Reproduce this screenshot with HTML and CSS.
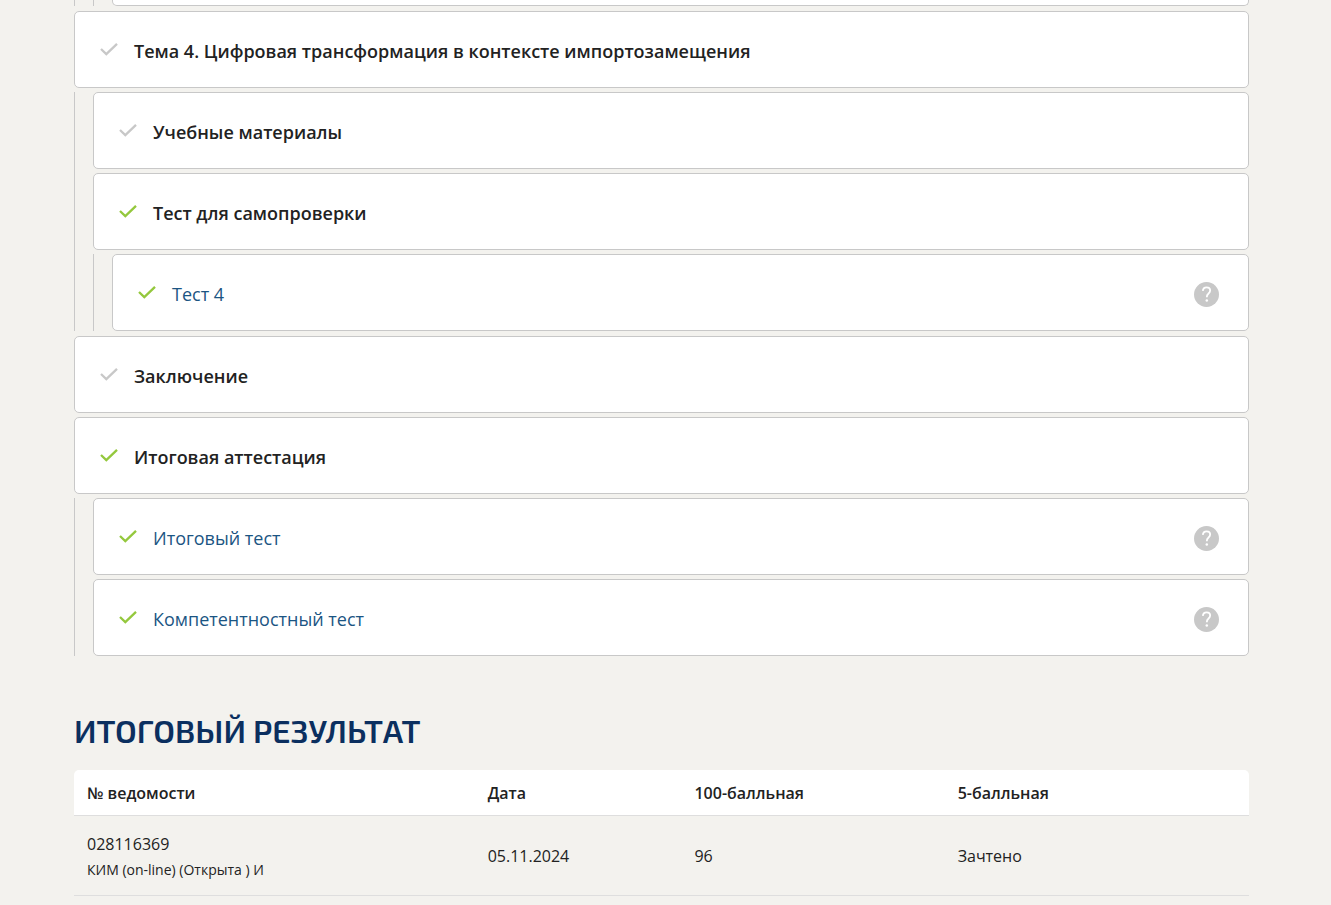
FILE: index.html
```
<!DOCTYPE html>
<html lang="ru">
<head>
  <meta charset="UTF-8">
  <meta name="viewport" content="width=device-width, initial-scale=1">
  <title>Итоговый результат</title>
  <link rel="stylesheet" href="styles.css">
</head>
<body>
  <!-- Shared icons -->
  <svg class="sprite" aria-hidden="true">
    <symbol id="check" viewBox="0 0 18 18">
      <path d="M1 7 L6.3 12.1 L17 1.8" fill="none" stroke="currentColor" stroke-width="2.3"/>
    </symbol>
    <symbol id="question" viewBox="0 0 26 26">
      <circle cx="13" cy="13" r="13" fill="currentColor"/>
      <path d="M9.2 9.3 C9.4 6.9 11 5.5 13.1 5.5 C15.3 5.5 16.8 6.8 16.8 8.8 C16.8 10.4 16 11.2 14.9 12.2 C13.8 13.1 13.3 13.8 13.3 15.8" fill="none" stroke="#fff" stroke-width="1.9"/>
      <circle cx="13.3" cy="19.3" r="1.3" fill="#fff"/>
    </symbol>
  </svg>

  <main class="page">
    <!-- Course outline -->
    <div class="outline">
      <div class="group">
        <div class="group">
          <div class="item item-cut"></div>
        </div>
      </div>

      <div class="item">
        <svg class="check"><use href="#check"/></svg>
        <span class="title">Тема 4. Цифровая трансформация в контексте импортозамещения</span>
      </div>
      <div class="group">
        <div class="item">
          <svg class="check"><use href="#check"/></svg>
          <span class="title">Учебные материалы</span>
        </div>
        <div class="item">
          <svg class="check done"><use href="#check"/></svg>
          <span class="title">Тест для самопроверки</span>
        </div>
        <div class="group">
          <div class="item">
            <svg class="check done"><use href="#check"/></svg>
            <a class="link" href="#">Тест 4</a>
            <button class="help" type="button" aria-label="Справка"><svg><use href="#question"/></svg></button>
          </div>
        </div>
      </div>

      <div class="item">
        <svg class="check"><use href="#check"/></svg>
        <span class="title">Заключение</span>
      </div>

      <div class="item">
        <svg class="check done"><use href="#check"/></svg>
        <span class="title">Итоговая аттестация</span>
      </div>
      <div class="group">
        <div class="item">
          <svg class="check done"><use href="#check"/></svg>
          <a class="link" href="#">Итоговый тест</a>
          <button class="help" type="button" aria-label="Справка"><svg><use href="#question"/></svg></button>
        </div>
        <div class="item">
          <svg class="check done"><use href="#check"/></svg>
          <a class="link" href="#">Компетентностный тест</a>
          <button class="help" type="button" aria-label="Справка"><svg><use href="#question"/></svg></button>
        </div>
      </div>
    </div>

    <!-- Final result -->
    <h2 id="result">ИТОГОВЫЙ РЕЗУЛЬТАТ</h2>
    <table class="result" aria-labelledby="result">
      <thead>
        <tr>
          <th class="col-number">№ ведомости</th>
          <th class="col-date">Дата</th>
          <th class="col-hundred">100-балльная</th>
          <th>5-балльная</th>
        </tr>
      </thead>
      <tbody>
        <tr>
          <td>028116369<small>КИМ (on-line) (Открыта ) И</small></td>
          <td>05.11.2024</td>
          <td>96</td>
          <td>Зачтено</td>
        </tr>
      </tbody>
    </table>
  </main>
</body>
</html>
```
FILE: styles.css
```
* {
  margin: 0;
  padding: 0;
  box-sizing: border-box;
}
body {
  font-family: "Segoe UI", "Open Sans", "Noto Sans", sans-serif;
  font-size: 16px;
  color: #222;
  background: #f3f2ee;
}
.sprite {
  display: none;
}
.page {
  padding: 0 82px 9px 74px;
}

/* Course outline */
.outline,
.group {
  display: flex;
  flex-direction: column;
  gap: 4px;
}
.group {
  padding-left: 18px;
  border-left: 1px solid #c8c8c8;
}
.outline > .group:not(:last-child) {
  margin-bottom: 1px;
}
.item {
  display: flex;
  align-items: center;
  min-height: 77px;
  padding: 3px 29px 0 25px;
  background: #fff;
  border: 1px solid #c8c8c8;
  border-radius: 5px;
}
/* Only the bottom edge of this row is in view */
.item-cut {
  min-height: 6px;
  border-top: 0;
  border-radius: 0 0 5px 5px;
}
.check {
  flex: none;
  width: 18px;
  height: 18px;
  margin-right: 16px;
  color: #c8c8c8;
}
.check.done {
  color: #94c83d;
}
.title,
.link {
  font-size: 18px;
  line-height: 24px;
}
.title {
  font-weight: 600;
}
.link {
  color: #1b5583;
  text-decoration: none;
}
.help {
  width: 25px;
  height: 25px;
  margin-left: auto;
  color: #c8c8c8;
  background: none;
  border: 0;
  cursor: pointer;
}
.help svg {
  display: block;
  width: 25px;
  height: 25px;
}

/* Final result */
h2 {
  margin: 54px 0 20px;
  font-family: "Exo 2", Roboto, sans-serif;
  font-size: 32px;
  font-weight: 600;
  line-height: 40px;
  color: #0b2f5f;
}
.result {
  width: 100%;
  table-layout: fixed;
  border-collapse: separate;
  border-spacing: 0;
  text-align: left;
}
.result th,
.result td {
  padding: 0 13px;
  border-bottom: 1px solid #dedede;
}
.result th {
  height: 46px;
  font-weight: 600;
  background: #fff;
}
.result th:first-child {
  border-top-left-radius: 5px;
}
.result th:last-child {
  border-top-right-radius: 5px;
}
.result td {
  height: 80px;
  line-height: 28px;
}
.result small {
  display: block;
  font-size: 14px;
  line-height: 24px;
}
.col-number {
  width: 34.1%;
}
.col-date {
  width: 17.6%;
}
.col-hundred {
  width: 22.4%;
}
```
